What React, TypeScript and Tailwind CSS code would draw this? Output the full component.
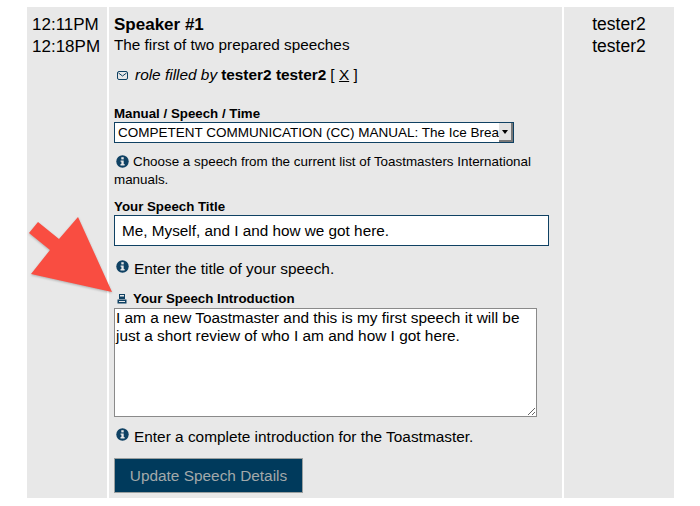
function InfoIcon() {
  return (
    <svg width="13" height="13" viewBox="0 0 13 13" className="shrink-0">
      <circle cx="6.5" cy="6.5" r="6.2" fill="#0f4163" />
      <rect x="5.3" y="2.2" width="2.4" height="2.2" fill="#e8e8e8" />
      <path d="M4.6 5.400h3.100v3.700h.9v1.500H4.500V9.100h.9V6.800h-.8z" fill="#e8e8e8" />
    </svg>
  );
}

function Hint({ children }: { children: React.ReactNode }) {
  return (
    <div className="flex items-start gap-[5px] pl-[2px] text-[15.4px] leading-[18px]">
      <span>
        <InfoIcon />
      </span>
      <span>{children}</span>
    </div>
  );
}

export default function App() {
  return (
    <div className="relative w-[700px] h-[506px] bg-white overflow-hidden pt-[7px] pl-[27px] text-black font-['Liberation_Sans',Arial,sans-serif]">
      <div className="grid grid-cols-[80px_453px_110px] gap-x-[2px] h-[491px]">
        {/* time column */}
        <div className="bg-[#e8e8e8] pt-[7px] pl-[5px] text-[17px] leading-[21.5px]">
          <div>12:11PM</div>
          <div>12:18PM</div>
        </div>

        {/* main column */}
        <div className="bg-[#e8e8e8] pt-[7px] pl-[5px]">
          <div className="text-[17px] leading-[21px] font-bold">Speaker #1</div>
          <div className="text-[15.3px] leading-[20px]">The first of two prepared speeches</div>

          <div className="flex items-center mt-[11px] pl-[3px] text-[15.4px] leading-[18px]">
            <svg width="11" height="9" viewBox="0 0 11 9" className="mr-[7px] shrink-0">
              <rect x="0.5" y="0.5" width="10" height="8" rx="1.5" fill="none" stroke="#0f4163" />
              <path d="M1.500 2l4 3 4-3" fill="none" stroke="#0f4163" />
            </svg>
            <span className="italic">role filled by</span>
            <span className="font-bold ml-[4px]">tester2 tester2</span>
            <span className="ml-[4px]">[ <span className="underline">X</span> ]</span>
          </div>

          <div className="mt-[22px] text-[13.3px] leading-[15px] font-bold">Manual / Speech / Time</div>
          <div className="flex w-[400px] h-[21px] mt-[1px] bg-white border border-[#0f4163] text-[13.5px] leading-[19px] pl-[3px]">
            <span className="flex-1 overflow-hidden whitespace-nowrap">COMPETENT COMMUNICATION (CC) MANUAL: The Ice Breaker</span>
            <span className="w-[14px] bg-[#e2e2e2] border-r-2 border-b-2 border-[#777777] flex items-center justify-center">
              <span className="w-0 h-0 border-x-[3px] border-x-transparent border-t-[4px] border-t-black" />
            </span>
          </div>

          <div className="mt-[10px] w-[430px] text-[13.4px] leading-[18px]">
            <span className="inline-block align-[-2px] ml-[2px] mr-[4px]">
              <InfoIcon />
            </span>
            Choose a speech from the current list of Toastmasters International manuals.
          </div>

          <div className="mt-[10px] text-[13.3px] leading-[16px] font-bold">Your Speech Title</div>
          <input
            readOnly
            value="Me, Myself, and I and how we got here."
            className="block w-[435px] h-[31px] bg-white border border-[#0f4163] px-[7px] text-[15.3px] outline-none"
          />

          <div className="mt-[14px]">
            <Hint>Enter the title of your speech.</Hint>
          </div>

          <div className="flex items-center mt-[14px] pl-[3px] text-[13.3px] leading-[14px] font-bold">
            <svg width="10" height="10" viewBox="0 0 10 10" className="mr-[6px] shrink-0">
              <path d="M2 0h6v5H2z" fill="#0f4163" />
              <rect x="3" y="1" width="4" height="1.500" fill="#e8e8e8" />
              <path d="M0.500 5.500h9v4h-9z" fill="#0f4163" />
              <rect x="2" y="7" width="6" height="1" fill="#e8e8e8" />
            </svg>
            Your Speech Introduction
          </div>
          <textarea
            readOnly
            value="I am a new Toastmaster and this is my first speech it will be just a short review of who I am and how I got here."
            className="block w-[423px] h-[109px] mt-[2px] bg-white border border-[#8a8a8a] px-[1px] text-[15.4px] leading-[18px] outline-none"
          />

          <div className="mt-[11px]">
            <Hint>Enter a complete introduction for the Toastmaster.</Hint>
          </div>

          <button className="block mt-[12px] w-[189px] h-[35px] bg-[#003a5c] border border-[#9a9f9f] text-[#a3a9aa] text-[15.4px]">
            Update Speech Details
          </button>
        </div>

        {/* role column */}
        <div className="bg-[#e8e8e8] pt-[7px] text-center text-[17.5px] leading-[21.5px]">
          <div>tester2</div>
          <div>tester2</div>
        </div>
      </div>

      {/* red annotation arrow */}
      <svg width="90" height="90" viewBox="0 0 90 90" className="absolute left-[25px] top-[212px] drop-shadow-[0_1px_1px_rgba(0,0,0,0.25)]">
        <path d="M13 10L4 21l21 17L6 62l81 18L53 5 34 27z" fill="#f94d41" />
      </svg>
    </div>
  );
}
